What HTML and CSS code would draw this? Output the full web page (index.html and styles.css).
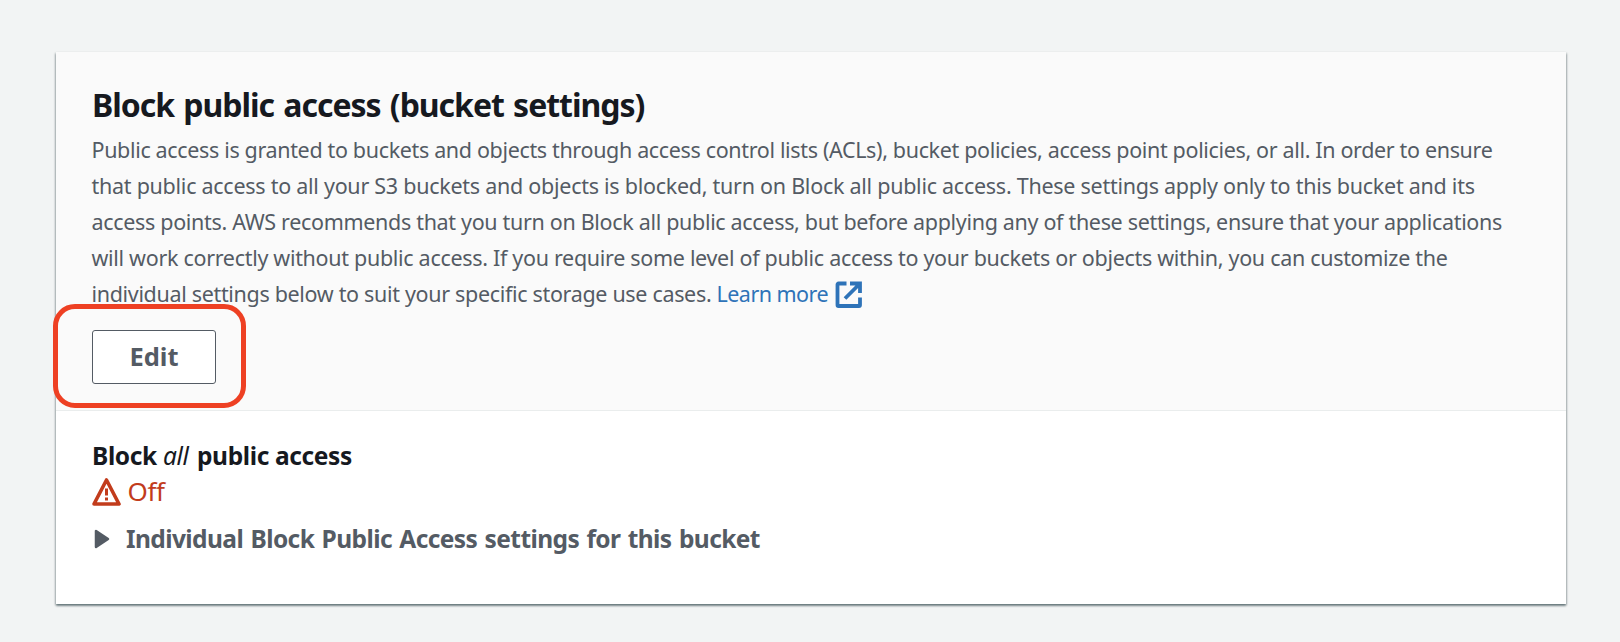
FILE: index.html
```
<!DOCTYPE html>
<html lang="en">
<head>
<meta charset="utf-8">
<title>Block public access</title>
<link rel="stylesheet" href="styles.css">
</head>
<body>
<main class="card">
  <header class="card-header">
    <h2 class="title">Block public access (bucket settings)</h2>
    <p class="description">
      <span class="line l1">Public access is granted to buckets and objects through access control lists (ACLs), bucket policies, access point policies, or all. In order to ensure</span>
      <span class="line l2">that public access to all your S3 buckets and objects is blocked, turn on Block all public access. These settings apply only to this bucket and its</span>
      <span class="line l3">access points. AWS recommends that you turn on Block all public access, but before applying any of these settings, ensure that your applications</span>
      <span class="line l4">will work correctly without public access. If you require some level of public access to your buckets or objects within, you can customize the</span>
      <span class="line l5">individual settings below to suit your specific storage use cases. <a class="link">Learn more</a><svg class="external" viewBox="0 0 27 27"><path d="M11.500 2.500H3.500a1 1 0 0 0-1 1V24a1 1 0 0 0 1 1H24a1 1 0 0 0 1-1V16.500M15 2.500h10V12M24.500 3L10 17.500" fill="none" stroke="currentColor" stroke-width="3.800"/></svg></span>
    </p>
    <div class="actions"><button class="edit">Edit</button><span class="highlight"></span></div>
  </header>
  <section class="card-body">
    <div class="label"><b>Block <em>all</em> public access</b></div>
    <div class="status"><svg class="warning" viewBox="0 0 29 29"><path d="M14.500 3L27 27H2z" fill="none" stroke="currentColor" stroke-width="3.600" stroke-linejoin="round"/><path d="M14.500 11.500v7M14.500 20.500v3" fill="none" stroke="currentColor" stroke-width="3"/></svg><span>Off</span></div>
    <div class="expander"><svg class="caret" viewBox="0 0 16 20"><path d="M2 2v16l12-8z" fill="currentColor" stroke="currentColor" stroke-width="2.500" stroke-linejoin="round"/></svg><span>Individual Block Public Access settings for this bucket</span></div>
  </section>
</main>
</body>
</html>
```
FILE: styles.css
```
* { box-sizing: border-box; }
html { background: #f2f4f4; }
body { margin: 0; min-height: 100vh; padding: 52px 54px 0 56px; background: #f2f4f4; font-family: "Noto Sans", sans-serif; color: #16191f; }
.card { width: 1510px; height: 552px; background: #fff; box-shadow: 0 2px 2px 0 rgba(0,28,36,.4), 1px 1px 2px 0 rgba(0,28,36,.2), -1px 1px 2px 0 rgba(0,28,36,.2); }
.card-header { height: 359px; padding: 31px 36px 0; background: #fafafa; border-bottom: 1px solid #eaeded; }
.title { margin: 0; font-size: 32px; line-height: 44px; font-weight: 700; letter-spacing: -1.03px; word-spacing: 2px; white-space: nowrap; }
.description { margin: 5px 0 0; font-size: 21.5px; color: #545b64; }
.line { display: block; height: 36px; line-height: 36px; white-space: nowrap; width: max-content; text-indent: -.5px; }
.l1 { letter-spacing: -.347px; }
.l2 { letter-spacing: -.265px; }
.l3 { letter-spacing: -.323px; }
.l4 { letter-spacing: -.306px; }
.l5 { letter-spacing: -.325px; }
.link { color: #2e73b8; letter-spacing: -.55px; }
.external { width: 27px; height: 27px; margin-left: 7px; vertical-align: -6px; color: #2e73b8; }
.actions { position: relative; margin-top: 18px; }
.edit { width: 124px; height: 54px; padding: 0 0 2px; border: 1px solid #545b64; border-radius: 3px; background: #fff; font: 700 25.5px/50px "Noto Sans", sans-serif; color: #545b64; display: block; }
.highlight { position: absolute; left: -39px; top: -26px; width: 193px; height: 104px; border: 5px solid #ee4023; border-radius: 22px; }
.card-body { padding: 27px 36px; }
.label { font-size: 24.5px; line-height: 36px; letter-spacing: -.36px; }
.label em { margin-right: 2.5px; font-weight: 400; }
.status { display: flex; align-items: center; gap: 6.500px; color: #c23c1c; font-size: 26px; line-height: 34px; height: 34px; letter-spacing: -.4px; }
.warning { width: 29px; height: 29px; }
.expander { display: flex; align-items: center; gap: 16px; margin-top: 13px; padding-left: 2px; font-size: 24.5px; line-height: 36px; font-weight: 700; letter-spacing: -.58px; word-spacing: 1.5px; color: #545b64; }
.caret { width: 16px; height: 20px; }
```
